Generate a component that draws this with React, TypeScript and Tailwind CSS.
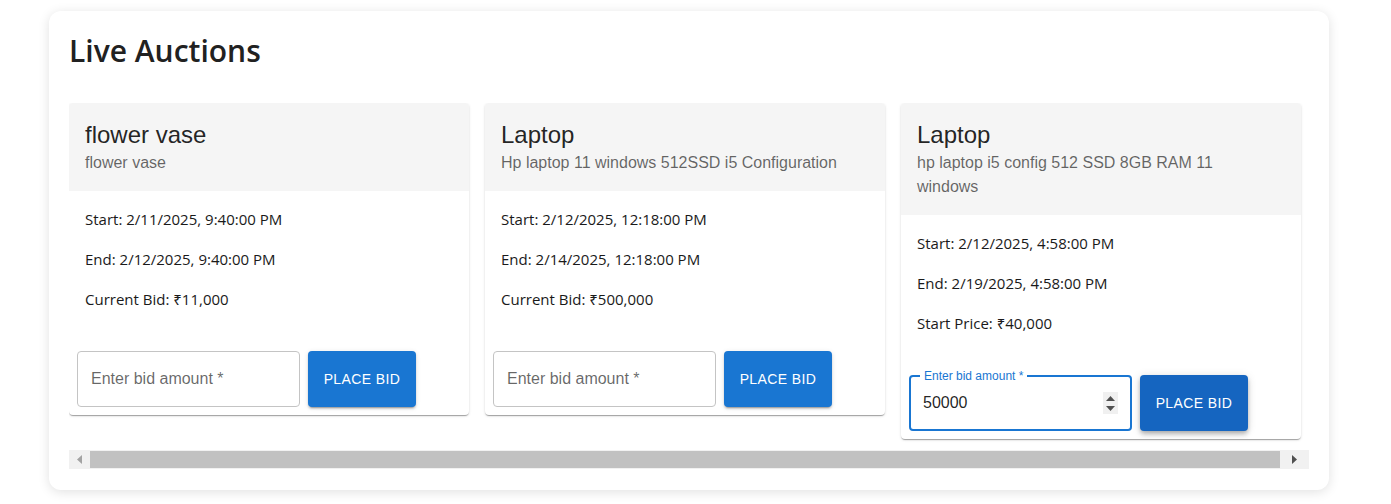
import React from "react";

type Item = {
  title: string;
  desc: string;
  start: string;
  end: string;
  priceLabel: string;
  price: string;
  focused?: boolean;
};

const items: Item[] = [
  {
    title: "flower vase",
    desc: "flower vase",
    start: "2/11/2025, 9:40:00 PM",
    end: "2/12/2025, 9:40:00 PM",
    priceLabel: "Current Bid",
    price: "₹11,000",
  },
  {
    title: "Laptop",
    desc: "Hp laptop 11 windows 512SSD i5 Configuration",
    start: "2/12/2025, 12:18:00 PM",
    end: "2/14/2025, 12:18:00 PM",
    priceLabel: "Current Bid",
    price: "₹500,000",
  },
  {
    title: "Laptop",
    desc: "hp laptop i5 config 512 SSD 8GB RAM 11 windows",
    start: "2/12/2025, 4:58:00 PM",
    end: "2/19/2025, 4:58:00 PM",
    priceLabel: "Start Price",
    price: "₹40,000",
    focused: true,
  },
];

const arial = { fontFamily: '"Liberation Sans", Arial, sans-serif' };
const body = { fontFamily: '"Open Sans", "Noto Sans", sans-serif' };

function BidInput({ focused }: { focused?: boolean }) {
  if (focused) {
    return (
      <div className="relative w-[223px] h-[56px] rounded-[4px] border-2 border-[#1976d2]" style={arial}>
        <span className="absolute left-[9px] -top-[9px] px-[4px] bg-white text-[12px] leading-[16px] text-[#1976d2]">
          Enter bid amount *
        </span>
        <div className="flex items-center h-full pl-[12px] pr-[12px]">
          <span className="flex-1 text-[16px] text-[rgba(0,0,0,0.87)]">50000</span>
          <div className="flex flex-col items-center justify-center gap-[5px] w-[15px] h-[22px] bg-[#f0f0f0]">
            <svg width="9" height="5" viewBox="0 0 9 5"><path d="M0 5 L4.5 0 L9 5 Z" fill="#505050" /></svg>
            <svg width="9" height="5" viewBox="0 0 9 5"><path d="M0 0 L4.5 5 L9 0 Z" fill="#505050" /></svg>
          </div>
        </div>
      </div>
    );
  }
  return (
    <div
      className="w-[223px] h-[56px] rounded-[4px] border border-[#c4c4c4] flex items-center pl-[13px]"
      style={arial}
    >
      <span className="text-[16px] text-[rgba(0,0,0,0.6)]">Enter bid amount *</span>
    </div>
  );
}

function Card({ item }: { item: Item }) {
  return (
    <div className="w-[400px] shrink-0 bg-white rounded-[4px] overflow-hidden shadow-[0_2px_1px_-1px_rgba(0,0,0,0.2),0_1px_1px_0_rgba(0,0,0,0.14),0_1px_3px_0_rgba(0,0,0,0.12)]">
      <div className="bg-[#f5f5f5] p-4" style={arial}>
        <div className="text-[24px] leading-[32px] text-[rgba(0,0,0,0.87)]">{item.title}</div>
        <div className="text-[16px] leading-[24px] text-[rgba(0,0,0,0.6)] max-w-[340px]">{item.desc}</div>
      </div>
      <div className="px-4 pt-4 pb-[32px] flex flex-col gap-4 text-[15px] leading-[24px] text-[#1a1a1a]" style={body}>
        <p>Start: {item.start}</p>
        <p>End: {item.end}</p>
        <p>
          {item.priceLabel}: {item.price}
        </p>
      </div>
      <div className="p-2 flex items-stretch gap-2">
        <BidInput focused={item.focused} />
        <button
          className={
            "w-[108px] h-[56px] rounded-[4px] text-white text-[14px] font-medium tracking-[0.4px] " +
            (item.focused
              ? "bg-[#1565c0] shadow-[0_2px_4px_-1px_rgba(0,0,0,0.2),0_4px_5px_0_rgba(0,0,0,0.14),0_1px_10px_0_rgba(0,0,0,0.12)]"
              : "bg-[#1976d2] shadow-[0_3px_1px_-2px_rgba(0,0,0,0.2),0_2px_2px_0_rgba(0,0,0,0.14),0_1px_5px_0_rgba(0,0,0,0.12)]")
          }
          style={arial}
        >
          PLACE BID
        </button>
      </div>
    </div>
  );
}

export default function App() {
  return (
    <div className="w-[1391px] h-[504px] bg-white pt-[11px] pl-[49px]">
      <div className="w-[1280px] h-[479px] bg-white rounded-[12px] shadow-[0_2px_12px_rgba(0,0,0,0.12)] px-5 pt-5">
        <h1 className="text-[30px] leading-[40px] font-semibold text-[#212121] mb-8" style={body}>
          Live Auctions
        </h1>
        <div className="w-[1240px] overflow-hidden">
          <div className="flex items-start gap-4 pb-[11px]">
            {items.map((it, i) => (
              <Card key={i} item={it} />
            ))}
          </div>
        </div>
        <div className="w-[1240px] h-[19px] bg-[#f1f1f1] flex items-center">
          <div className="w-[21px] h-full flex items-center justify-center">
            <svg width="5" height="9" viewBox="0 0 5 9"><path d="M5 0 L0 4.5 L5 9 Z" fill="#a3a3a3" /></svg>
          </div>
          <div className="w-[1190px] h-[17px] bg-[#c1c1c1]" />
          <div className="flex-1 h-full flex items-center justify-center">
            <svg width="5" height="9" viewBox="0 0 5 9"><path d="M0 0 L5 4.5 L0 9 Z" fill="#505050" /></svg>
          </div>
        </div>
      </div>
    </div>
  );
}
